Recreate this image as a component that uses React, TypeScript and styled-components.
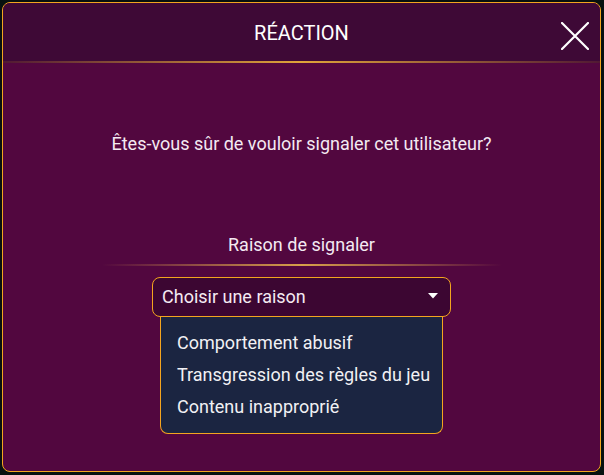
import React from 'react';
import styled, {createGlobalStyle} from 'styled-components';

const TITLE_TEXT = 'RÉACTION';
const QUESTION_TEXT = 'Êtes-vous sûr de vouloir signaler cet utilisateur?';
const LABEL_TEXT = 'Raison de signaler';
const PLACEHOLDER_TEXT = 'Choisir une raison';
const REASONS = [
  'Comportement abusif',
  'Transgression des règles du jeu',
  'Contenu inapproprié',
];

const GOLD = '#f3a51f';

const GlobalStyle = createGlobalStyle`
  html, body {
    margin: 0;
    padding: 0;
    background: #07110f;
    font-family: Roboto, "Liberation Sans", sans-serif;
  }
`;

const Page = styled.div`
  width: 604px;
  height: 475px;
  padding: 2px;
  box-sizing: border-box;
`;

const Modal = styled.section`
  width: 599px;
  height: 470px;
  box-sizing: border-box;
  border: 1px solid ${GOLD};
  border-radius: 8px;
  background: #52073f;
  overflow: hidden;
  display: flex;
  flex-direction: column;
`;

const Header = styled.header`
  position: relative;
  height: 60px;
  flex-shrink: 0;
  background: #3e0936;
  display: flex;
  align-items: center;
  justify-content: center;

  &::after {
    content: '';
    position: absolute;
    left: 0;
    right: 0;
    bottom: 0;
    height: 2px;
    background: linear-gradient(90deg, rgba(243, 165, 31, 0.1) 0%, #e0a43a 50%, rgba(243, 165, 31, 0.1) 100%);
  }
`;

const Title = styled.h1`
  margin: 0;
  font-size: 20px;
  font-weight: 400;
  color: #ffffff;
`;

const CloseButton = styled.button`
  position: absolute;
  right: 10px;
  top: 18px;
  width: 30px;
  height: 30px;
  padding: 0;
  border: none;
  background: transparent;
  display: flex;
  align-items: center;
  justify-content: center;
`;

const Body = styled.div`
  flex: 1;
  display: flex;
  flex-direction: column;
  align-items: center;
`;

const Question = styled.p`
  margin: 71px 0 0 0;
  font-size: 18px;
  line-height: 20px;
  color: #f4eaf2;
`;

const Label = styled.div`
  margin-top: 81px;
  font-size: 18px;
  line-height: 20px;
  color: #f4eaf2;
`;

const Divider = styled.div`
  margin-top: 9px;
  width: 400px;
  height: 2px;
  background: linear-gradient(90deg, rgba(224, 164, 58, 0) 0%, #d8a04a 50%, rgba(224, 164, 58, 0) 100%);
`;

const SelectWrap = styled.div`
  margin-top: 11px;
  width: 299px;
  display: flex;
  flex-direction: column;
  align-items: center;
`;

const SelectBox = styled.div`
  width: 100%;
  height: 40px;
  box-sizing: border-box;
  border: 1px solid ${GOLD};
  border-radius: 8px;
  background: #3c0632;
  display: flex;
  align-items: center;
  padding: 0 12px 2px 9px;
`;

const SelectText = styled.span`
  flex: 1;
  font-size: 18px;
  color: #f4eaf2;
`;

const Menu = styled.ul`
  margin: 0;
  width: 283px;
  box-sizing: border-box;
  list-style: none;
  background: #1b2541;
  border: 1px solid ${GOLD};
  border-top: none;
  border-radius: 0 0 8px 8px;
  padding: 10px 0 10px 16px;
`;

const MenuItem = styled.li`
  font-size: 18px;
  line-height: 32px;
  color: #f1f1f4;
`;

const App = () => {
  return (
    <Page>
      <GlobalStyle />
      <Modal>
        <Header>
          <Title>{TITLE_TEXT}</Title>
          <CloseButton>
            <svg width="28" height="28" viewBox="0 0 28 28">
              <path d="M1 1 L27 27 M27 1 L1 27" stroke="#ffffff" strokeWidth="2.2" strokeLinecap="round" />
            </svg>
          </CloseButton>
        </Header>
        <Body>
          <Question>{QUESTION_TEXT}</Question>
          <Label>{LABEL_TEXT}</Label>
          <Divider />
          <SelectWrap>
            <SelectBox>
              <SelectText>{PLACEHOLDER_TEXT}</SelectText>
              <svg width="10" height="6" viewBox="0 0 10 6">
                <path d="M0 0 L10 0 L5 5.5 Z" fill="#ffffff" />
              </svg>
            </SelectBox>
            <Menu>
              {REASONS.map(reason => (
                <MenuItem key={reason}>{reason}</MenuItem>
              ))}
            </Menu>
          </SelectWrap>
        </Body>
      </Modal>
    </Page>
  );
};

export default App;
